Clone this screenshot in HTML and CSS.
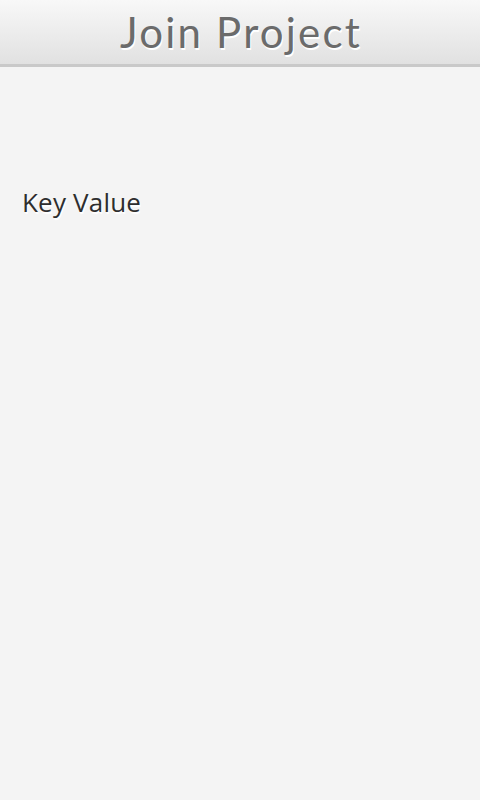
FILE: index.html
```html
<!DOCTYPE html>
<html>
<head>
<meta charset="utf-8">
<link rel="stylesheet" href="styles.css">
</head>
<body>
<header class="bar"><h1 class="title">Join Project</h1></header>
<main class="content"><p class="label">Key Value</p></main>
</body>
</html>
```
FILE: styles.css
```css
html, body { margin: 0; padding: 0; }
body { width: 480px; height: 800px; background: #f4f4f4; overflow: hidden; }
.bar {
  height: 64px;
  background: linear-gradient(#f8f8f8, #e1e1e1);
  border-bottom: 3px solid #c9c9c9;
  display: flex; align-items: center; justify-content: center;
}
.title {
  margin: 0 0 0 2px;
  font-family: Lato, sans-serif;
  font-weight: 400;
  font-size: 42px;
  line-height: 1;
  color: #6b6b6b;
  text-shadow: 1px 2px 0 #ffffff;
  letter-spacing: 2.2px;
}
.content { padding: 117px 22px 0; }
.label {
  margin: 0;
  font-family: "Open Sans", sans-serif;
  font-size: 26px;
  color: #2e2e2e;
  text-shadow: 1px 2px 1px #fff;
  letter-spacing: 0.2px;
}
```
